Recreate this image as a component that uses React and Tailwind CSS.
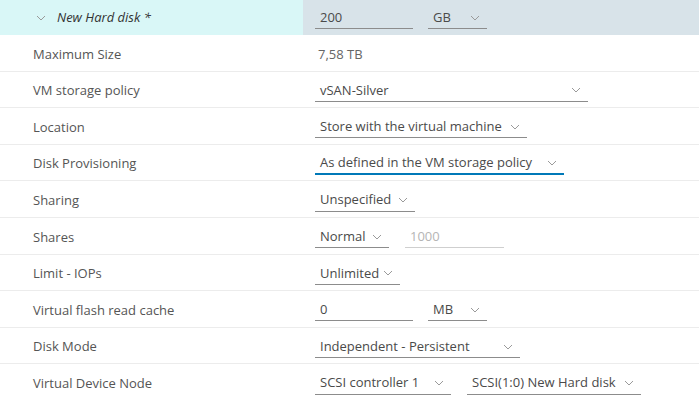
const Chevron = ({ className = '' }) => (
  <svg width="10" height="6" viewBox="0 0 10 6" className={className} aria-hidden="true">
    <polyline points="1,1 5,5 9,1" fill="none" stroke="#9a9a9a" strokeWidth="1" />
  </svg>
);

function Input({ value, w, muted = false }) {
  return (
    <div
      className={`flex h-[22px] items-center border-b px-[5px] ${muted ? 'border-[#cfcfcf] text-[#b5b5b5]' : 'border-[#8c8c8c] text-[#4a4a4a]'} ${w}`}
    >
      {value}
    </div>
  );
}

function Select({ value, w, active = false }) {
  return (
    <div
      className={`flex h-[22px] items-center justify-between pl-[5px] pr-[7px] text-[#4a4a4a] ${active ? 'border-b-2 border-[#0079b8]' : 'border-b border-[#8c8c8c]'} ${w}`}
    >
      <span>{value}</span>
      <Chevron />
    </div>
  );
}

const rows = [
  { label: 'Maximum Size', value: <span className="pl-[3px] text-[#666]">7,58 TB</span> },
  { label: 'VM storage policy', value: <Select value="vSAN-Silver" w="w-[273px]" /> },
  { label: 'Location', value: <Select value="Store with the virtual machine" w="w-[212px]" /> },
  { label: 'Disk Provisioning', value: <Select value="As defined in the VM storage policy" w="w-[249px]" active /> },
  { label: 'Sharing', value: <Select value="Unspecified" w="w-[100px]" /> },
  {
    label: 'Shares',
    value: (
      <div className="flex gap-[16px]">
        <Select value="Normal" w="w-[74px]" />
        <Input value="1000" w="w-[99px]" muted />
      </div>
    ),
  },
  { label: 'Limit - IOPs', value: <Select value="Unlimited" w="w-[85px]" /> },
  {
    label: 'Virtual flash read cache',
    value: (
      <div className="flex gap-[15px]">
        <Input value="0" w="w-[98px]" />
        <Select value="MB" w="w-[59px]" />
      </div>
    ),
  },
  { label: 'Disk Mode', value: <Select value="Independent - Persistent" w="w-[205px]" /> },
  {
    label: 'Virtual Device Node',
    value: (
      <div className="flex gap-[16px]">
        <Select value="SCSI controller 1" w="w-[136px]" />
        <Select value="SCSI(1:0) New Hard disk" w="w-[174px]" />
      </div>
    ),
  },
];

export default function App() {
  return (
    <div className="h-[399px] w-[699px] overflow-hidden bg-white text-[13px] font-['Open_Sans',sans-serif]">
      <div className="flex h-[35px]">
        <div className="flex w-[303px] items-center bg-[#d9f7f7] pl-[36px]">
          <Chevron />
          <span className="ml-[11px] italic text-[#333]">New Hard disk *</span>
        </div>
        <div className="flex flex-1 items-center gap-[15px] bg-[#d8e3e9] pl-[12px] pt-[1px]">
          <Input value="200" w="w-[98px]" />
          <Select value="GB" w="w-[59px]" />
        </div>
      </div>
      {rows.map((row) => (
        <div key={row.label} className="flex h-[36.6px] items-center border-b border-[#ececec] pt-[3px]">
          <div className="w-[303px] pl-[33px] text-[#555]">{row.label}</div>
          <div className="flex-1 pl-[12px]">{row.value}</div>
        </div>
      ))}
    </div>
  );
}
